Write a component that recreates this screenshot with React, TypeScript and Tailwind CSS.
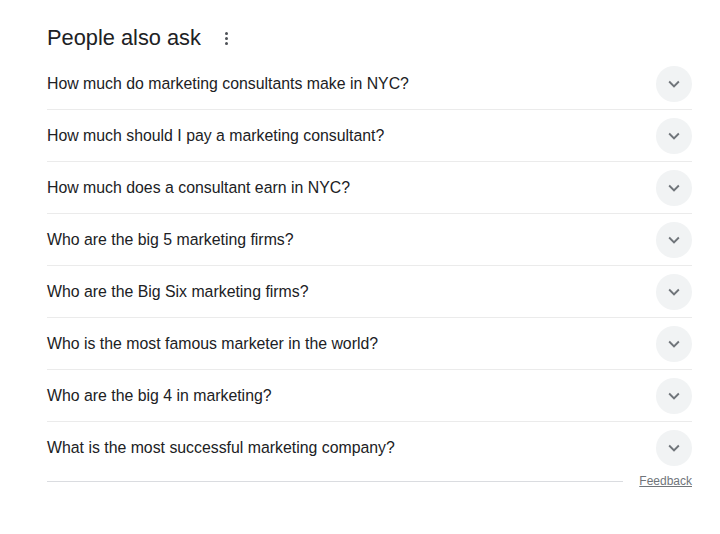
import React from 'react';

const questions = [
  'How much do marketing consultants make in NYC?',
  'How much should I pay a marketing consultant?',
  'How much does a consultant earn in NYC?',
  'Who are the big 5 marketing firms?',
  'Who are the Big Six marketing firms?',
  'Who is the most famous marketer in the world?',
  'Who are the big 4 in marketing?',
  'What is the most successful marketing company?',
];

function Chevron() {
  return (
    <svg width="22" height="22" viewBox="0 0 24 24" fill="#70757a">
      <path d="M16.59 8.59 12 13.17 7.41 8.59 6 10l6 6 6-6z" />
    </svg>
  );
}

export default function App() {
  return (
    <div className="w-[720px] h-[534px] bg-white font-['Liberation_Sans',Arial,sans-serif] text-[#202124]">
      <div className="ml-[47px] w-[645px]">
        {/* Heading */}
        <div className="flex items-center pt-[24px] h-[58px] pb-[6px]">
          <h2 className="text-[21.8px] leading-[28px]">People also ask</h2>
          <div className="ml-[24px] flex flex-col gap-[2px] items-center">
            <span className="block w-[3px] h-[3px] rounded-full bg-[#4d5156]" />
            <span className="block w-[3px] h-[3px] rounded-full bg-[#4d5156]" />
            <span className="block w-[3px] h-[3px] rounded-full bg-[#4d5156]" />
          </div>
        </div>

        {/* Questions */}
        <div>
          {questions.map((q, i) => (
            <div
              key={q}
              className={
                'flex items-center justify-between h-[52px] ' +
                (i < questions.length - 1 ? 'border-b border-[#ebebeb]' : '')
              }
            >
              <span className="text-[15.85px] leading-[24px]">{q}</span>
              <div className="w-[36px] h-[36px] rounded-full bg-[#f1f3f4] flex items-center justify-center">
                <Chevron />
              </div>
            </div>
          ))}
        </div>

        {/* Footer */}
        <div className="flex items-center h-[14px]">
          <div className="flex-1 h-px bg-[#dadce0]" />
          <a className="ml-[16px] text-[12px] leading-[16px] text-[#70757a] underline cursor-pointer">Feedback</a>
        </div>
      </div>
    </div>
  );
}
